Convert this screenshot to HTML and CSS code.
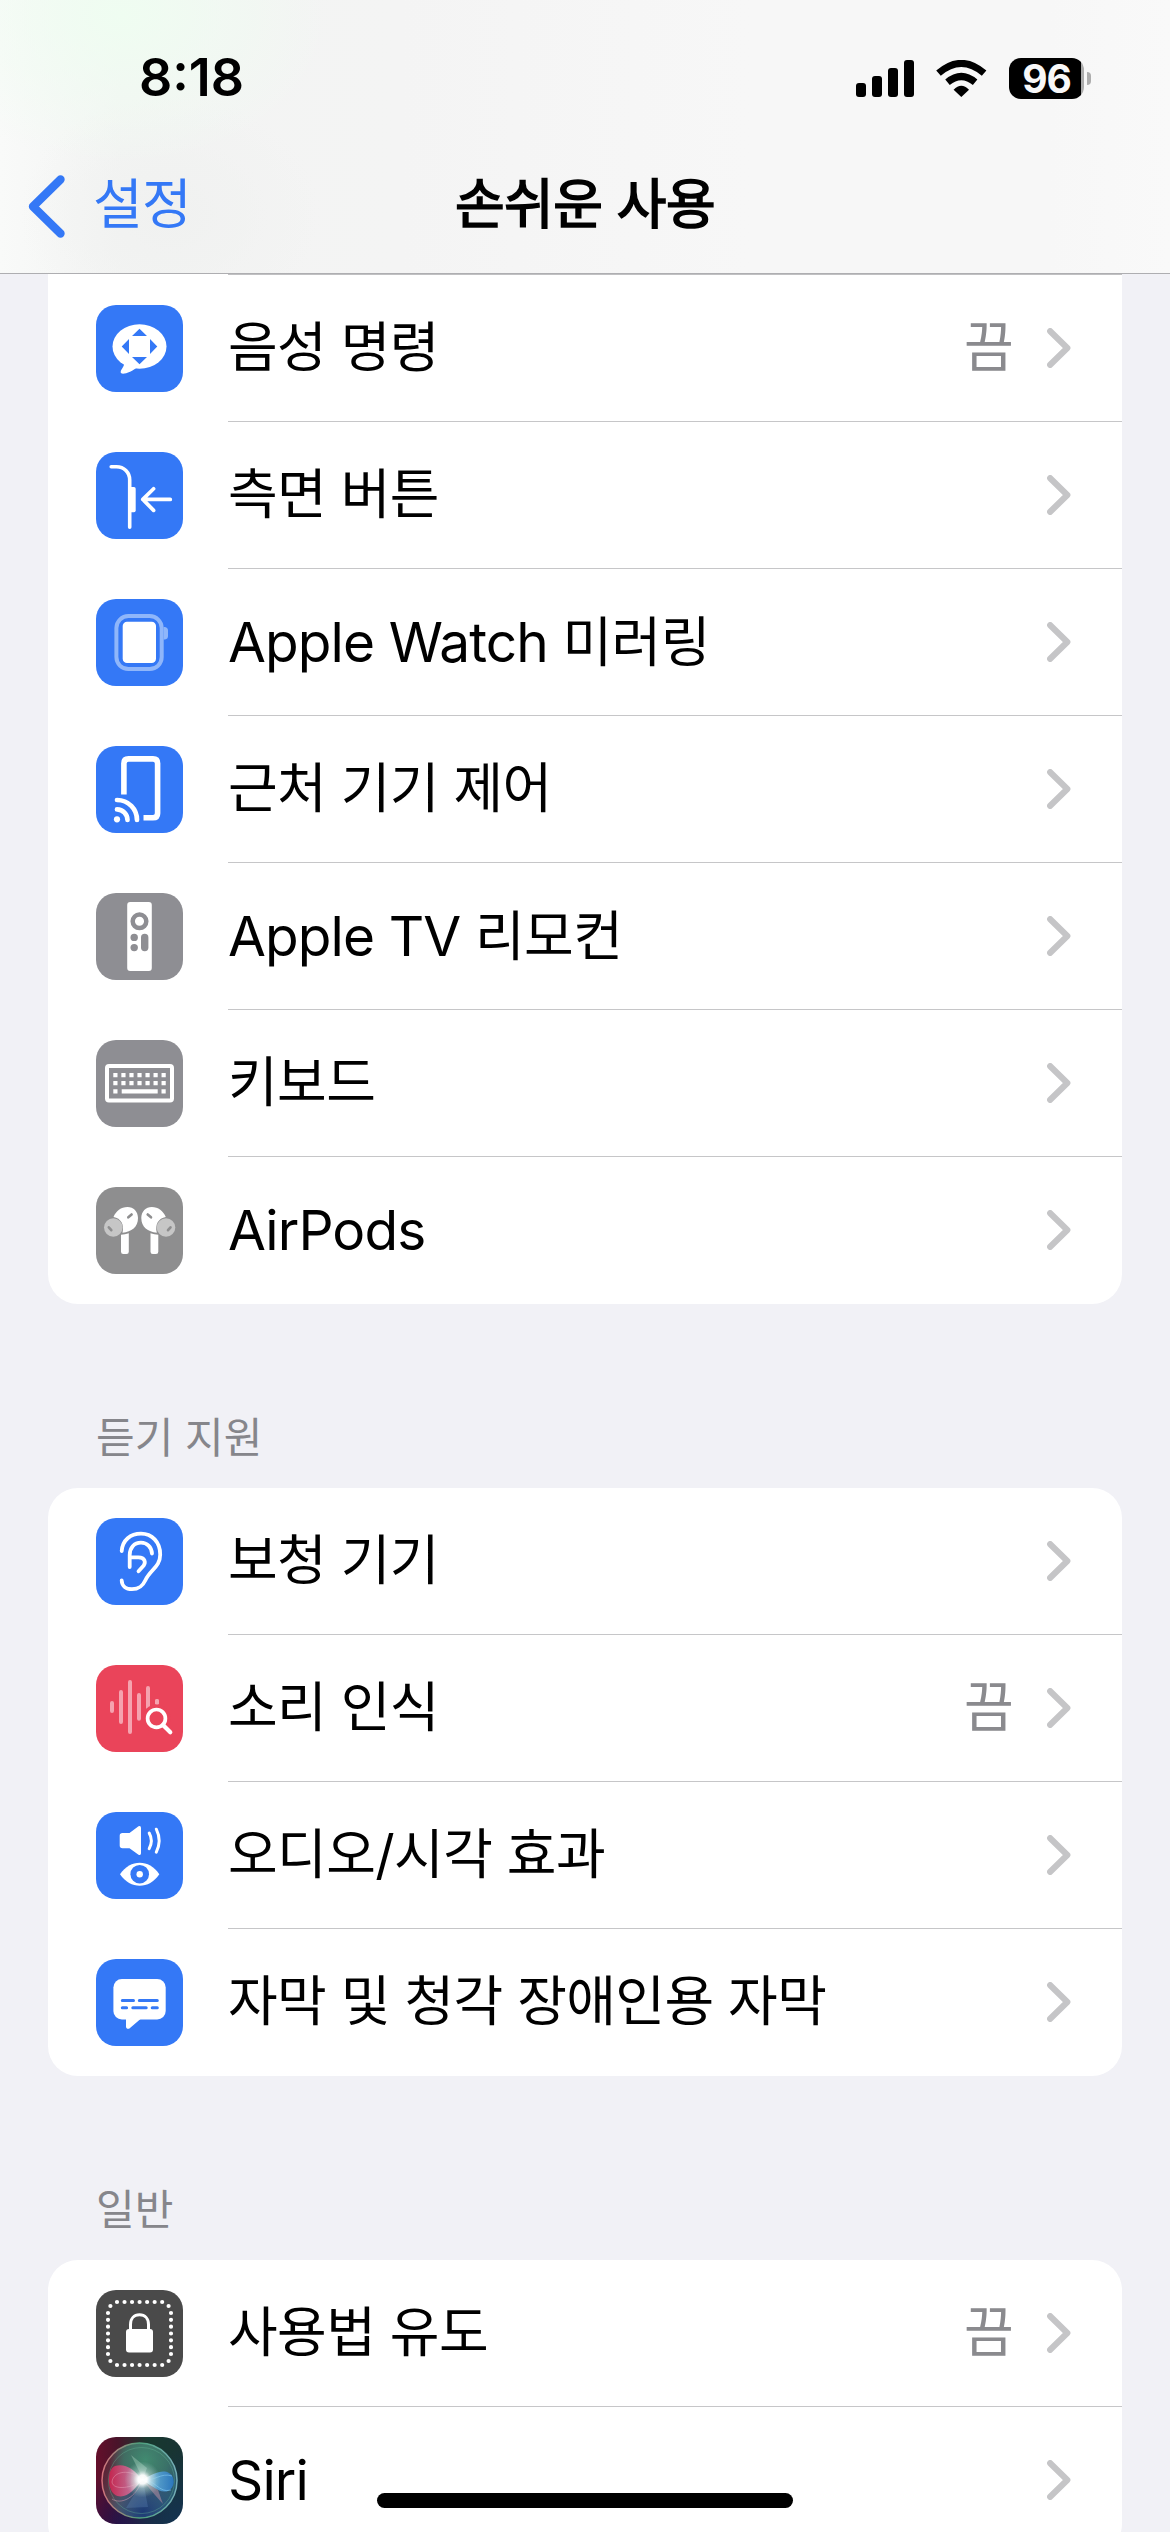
FILE: index.html
```html
<!DOCTYPE html>
<html lang="ko">
<head>
<meta charset="utf-8">
<title>손쉬운 사용</title>
<link rel="stylesheet" href="styles.css">
</head>
<body>
<svg class="defs" width="0" height="0">
  <defs>
    <symbol id="chevron" viewBox="0 0 24 40"><path d="M3.2 3.2L20.3 20L3.2 36.8" fill="none" stroke="#c5c5c7" stroke-width="6.2" stroke-linecap="round" stroke-linejoin="round"/></symbol>
    <g id="airpod">
      <path d="M17.5 30C20 24 25 20 31.5 20C37.500 20 42 24.500 42 31C42 40 35.500 45 26.500 45.700C28.500 38 25 31 17.500 30Z" fill="#fff"/>
      <circle cx="17.300" cy="40.500" r="9.300" fill="#c6c6c6"/>
      <path d="M12.800 40.300L15.300 43.200M32.300 30.300L35.600 27.500" stroke="#8e8e8f" stroke-width="2.600" stroke-linecap="round"/>
      <path d="M25 47.800Q29 47.600 32.800 46.300V64.700Q32.800 67 30.500 67H27.300Q25 67 25 64.700Z" fill="#fff"/>
    </g>
  </defs>
</svg>
<div class="screen">
  <header class="header">
    <div class="status">
      <div class="time">8:18</div>
      <div class="indicators">
        <svg class="signal" viewBox="0 0 58 37"><rect y="23" width="10" height="14" rx="3"/><rect x="16" y="16" width="10" height="21" rx="3"/><rect x="32" y="8" width="10" height="29" rx="3"/><rect x="48" width="10" height="37" rx="3"/></svg>
        <svg class="wifi" viewBox="0 0 51 37"><path d="M25.300 37L17.600 29.800Q25.300 21.800 33 29.800Z"/><path d="M11.500 22.300Q25.300 10.700 39.100 22.300" fill="none" stroke="#000" stroke-width="7"/><path d="M2.500 13.200Q25.300 -6.300 48.100 13.200" fill="none" stroke="#000" stroke-width="7"/></svg>
        <div class="battery"><div class="level">96</div><div class="nub"></div></div>
      </div>
    </div>
    <nav class="nav">
      <div class="back"><svg class="back-icon" viewBox="0 0 37 63"><path d="M32.500 4.500L5 31.500L32.500 58.500" fill="none" stroke="#3478f6" stroke-width="8.400" stroke-linecap="round" stroke-linejoin="round"/></svg><span class="back-label">설정</span></div>
      <h1 class="title">손쉬운 사용</h1>
      <div></div>
    </nav>
  </header>
  <main>
    <section class="card card-continued">
      <div class="cut-line"></div>
      <div class="row">
        <svg class="icon blue" viewBox="0 0 87 87"><ellipse cx="43.500" cy="41.500" rx="27" ry="22.300" fill="#fff"/><path d="M28 57C29 62 24.500 64 24.700 67.300C25 71 36 67 41.500 62Z" fill="#fff"/><path d="M43.500 23.700L51 31H36ZM43.500 59.300L51 52H36ZM25.700 41.500L33 34V49ZM61.300 41.500L54 34V49Z" fill="#3478f6"/></svg>
        <div class="body"><span class="label">음성 명령</span><span class="value">끔</span><svg class="chev"><use href="#chevron"/></svg></div>
      </div>
      <div class="row">
        <svg class="icon blue" viewBox="0 0 87 87"><g fill="none" stroke="#fff" stroke-linecap="round" stroke-linejoin="round"><path d="M15.200 14.700H20.500C28 14.700 33.700 20.500 33.700 28V75.300" stroke-width="3.600"/><path d="M57.600 36.700L46.800 47.400L57.600 58.400M47 47.400H74.300" stroke-width="3.700"/></g><path d="M33 35H38Q39.700 35 39.700 36.700V58.600Q39.700 60.300 38 60.300H33Z" fill="#fff"/></svg>
        <div class="body"><span class="label">측면 버튼</span><svg class="chev"><use href="#chevron"/></svg></div>
      </div>
      <div class="row">
        <svg class="icon blue" viewBox="0 0 87 87"><rect x="20.400" y="17.100" width="45.300" height="53" rx="12" fill="none" stroke="#8fb6fa" stroke-width="4"/><path d="M67.700 28H69Q72 28.500 72 31.500V37Q72 40 69 40.500H67.700Z" fill="#8fb6fa"/><rect x="26.700" y="22.700" width="33.300" height="41.300" rx="4.300" fill="#fff"/></svg>
        <div class="body"><span class="label"><span class="latin">Apple Watch</span> 미러링</span><svg class="chev"><use href="#chevron"/></svg></div>
      </div>
      <div class="row">
        <svg class="icon blue" viewBox="0 0 87 87"><g fill="none" stroke="#fff"><path d="M27.900 48.400V17.500Q27.900 12.900 32.500 12.900H57Q61.600 12.900 61.600 17.500V67.200Q61.600 71.800 57 71.800H47.500" stroke-width="5.600"/><path d="M21 63.400C27 63.400 31.500 68.500 31.500 74M21 54C32.500 54 41 63 41 74" stroke-width="4.700" stroke-linecap="round"/></g><circle cx="21" cy="73.300" r="3.100" fill="#fff"/></svg>
        <div class="body"><span class="label">근처 기기 제어</span><svg class="chev"><use href="#chevron"/></svg></div>
      </div>
      <div class="row">
        <svg class="icon gray" viewBox="0 0 87 87"><rect x="31.200" y="9" width="24.600" height="69" rx="3" fill="#fff"/><circle cx="43.500" cy="28.300" r="6.800" fill="none" stroke="#8e8e93" stroke-width="4.500"/><g fill="#8e8e93"><circle cx="38.200" cy="44.400" r="3.700"/><circle cx="38.200" cy="54.600" r="3.700"/><rect x="45" y="40.700" width="7.400" height="17.600" rx="3.700"/></g></svg>
        <div class="body"><span class="label"><span class="latin">Apple TV</span> 리모컨</span><svg class="chev"><use href="#chevron"/></svg></div>
      </div>
      <div class="row">
        <svg class="icon gray" viewBox="0 0 87 87"><rect x="11" y="26" width="65" height="34.600" rx="2" fill="none" stroke="#fff" stroke-width="4"/><path d="M17.300 35.200H70M17.300 43.200H70" stroke="#fff" stroke-width="4.200" stroke-dasharray="4.200 3.840"/><path d="M17.300 51.300H21.500M25.700 51.300H61.700M65.500 51.300H69.700" stroke="#fff" stroke-width="4.200"/></svg>
        <div class="body"><span class="label">키보드</span><svg class="chev"><use href="#chevron"/></svg></div>
      </div>
      <div class="row">
        <svg class="icon gray-neutral" viewBox="0 0 87 87"><use href="#airpod"/><use href="#airpod" transform="matrix(-1 0 0 1 87.300 0)"/></svg>
        <div class="body"><span class="label"><span class="latin">AirPods</span></span><svg class="chev"><use href="#chevron"/></svg></div>
      </div>
    </section>

    <h2 class="section-title">듣기 지원</h2>
    <section class="card">
      <div class="row">
        <svg class="icon blue" viewBox="0 0 87 87"><g fill="none" stroke="#fff" stroke-width="3.800" stroke-linecap="round" stroke-linejoin="round"><path d="M25.700 33C26.500 22 34.500 15.700 45 15.700C56 15.700 64.200 24 64.200 36.500C64.200 49 54.500 51.500 49.500 62C46.500 68.500 43 71.200 36 71.200C29.500 71.200 25.900 67.500 25.700 62.500"/><path d="M56 35.500C55.500 29 51 24.700 45 24.700C38 24.700 33.700 30 33.700 37V49M34 39.300H42.500C49 39.300 50 44.500 47.500 47.800L42.500 53.300"/></g></svg>
        <div class="body"><span class="label">보청 기기</span><svg class="chev"><use href="#chevron"/></svg></div>
      </div>
      <div class="row">
        <svg class="icon red" viewBox="0 0 87 87"><path d="M16 38V46M25 27V57M34 17V67M43 30V53.700M52 23V43M61 36V38" stroke="#f5a3af" stroke-width="4" stroke-linecap="round"/><circle cx="60.500" cy="53.400" r="14" fill="#ea445a"/><path d="M59 39V36A2 2 0 0 1 63 36V39Z" fill="#f5a3af"/><circle cx="60.500" cy="53.400" r="8.900" fill="none" stroke="#fff" stroke-width="3.700"/><path d="M67 60L74.300 67.300" stroke="#fff" stroke-width="4.200" stroke-linecap="round"/></svg>
        <div class="body"><span class="label">소리 인식</span><span class="value">끔</span><svg class="chev"><use href="#chevron"/></svg></div>
      </div>
      <div class="row">
        <svg class="icon blue" viewBox="0 0 87 87"><path d="M26.500 21H33.500L42.500 14.300Q45 13.500 45 16V41.300Q45 43.800 42.500 42.800L33.500 36.300H26.500Q23.700 36.300 23.700 33.500V23.800Q23.700 21 26.500 21Z" fill="#fff"/><path d="M53.200 21Q57.500 28.700 53.200 36.600M60.300 17.200Q66 28.700 60.300 40.200" fill="none" stroke="#fff" stroke-width="3" stroke-linecap="round"/><path d="M24 62.200C34.500 46.900 53 46.900 63.300 62.200C53 77.600 34.500 77.600 24 62.200Z" fill="#fff"/><circle cx="43.700" cy="62.200" r="9.300" fill="#3478f6"/><circle cx="43.700" cy="62.200" r="3.200" fill="#fff"/></svg>
        <div class="body"><span class="label">오디오/시각 효과</span><svg class="chev"><use href="#chevron"/></svg></div>
      </div>
      <div class="row">
        <svg class="icon blue" viewBox="0 0 87 87"><rect x="17.400" y="20" width="52.300" height="40.400" rx="8.500" fill="#fff"/><path d="M30 59V67.500C30 70 32.500 70.500 34 69L44.500 60Z" fill="#fff"/><path d="M26.300 41.400H37.500M43.300 41.400H61.300M26.300 48.800H30.600M36.800 48.800H50.200M56.200 48.800H61.300" stroke="#3478f6" stroke-width="3" stroke-linecap="round"/></svg>
        <div class="body"><span class="label">자막 및 청각 장애인용 자막</span><svg class="chev"><use href="#chevron"/></svg></div>
      </div>
    </section>

    <h2 class="section-title">일반</h2>
    <section class="card">
      <div class="row">
        <svg class="icon dark" viewBox="0 0 87 87"><g stroke="#fff" stroke-width="4.200" stroke-linecap="round" fill="none"><path d="M21 12H67M21 75H67" stroke-dasharray="0 7.530"/><path d="M12 23V65M75 23V65" stroke-dasharray="0 6.830"/><path d="M14.400 16h.01M72.600 16h.01M14.400 71h.01M72.600 71h.01"/></g><rect x="30" y="39" width="27" height="23.400" rx="3" fill="#fff"/><path d="M34.500 40V34.500C34.500 28.500 38 24.800 43.500 24.800C49 24.800 52.500 28.500 52.500 34.500V40" fill="none" stroke="#fff" stroke-width="3"/></svg>
        <div class="body"><span class="label">사용법 유도</span><span class="value">끔</span><svg class="chev"><use href="#chevron"/></svg></div>
      </div>
      <div class="row">
        <svg class="icon siri" viewBox="0 0 87 87">
          <defs>
            <linearGradient id="orb" x1="0" y1=".3" x2="1" y2=".7"><stop offset="0" stop-color="#5e1c30"/><stop offset=".4" stop-color="#52555f"/><stop offset="1" stop-color="#245a72"/></linearGradient>
            <radialGradient id="orbTop" cx="58%" cy="22%" r="48%"><stop offset="0" stop-color="#418a70"/><stop offset=".6" stop-color="#3b7968" stop-opacity=".8"/><stop offset="1" stop-color="#3b7968" stop-opacity="0"/></radialGradient>
            <radialGradient id="orbBottom" cx="55%" cy="92%" r="48%"><stop offset="0" stop-color="#1c3974"/><stop offset="1" stop-color="#315b91" stop-opacity="0"/></radialGradient>
            <linearGradient id="rim" x1="0" y1="0" x2="1" y2="0"><stop offset="0" stop-color="#d2737c"/><stop offset=".5" stop-color="#4da07b"/><stop offset="1" stop-color="#76aeb8"/></linearGradient>
            <linearGradient id="pink" x1="0" y1="0" x2="1" y2="0"><stop offset="0" stop-color="#cf2450"/><stop offset=".65" stop-color="#ce6b96"/><stop offset="1" stop-color="#fff"/></linearGradient>
            <linearGradient id="azure" x1="0" y1="0" x2="1" y2="0"><stop offset="0" stop-color="#fff"/><stop offset=".45" stop-color="#5ba5d5"/><stop offset="1" stop-color="#2b79c4"/></linearGradient>
            <radialGradient id="flare"><stop offset="0" stop-color="#fff"/><stop offset=".25" stop-color="#fff" stop-opacity=".95"/><stop offset=".5" stop-color="#d9eeeb" stop-opacity=".45"/><stop offset="1" stop-color="#bde4db" stop-opacity="0"/></radialGradient>
          </defs>
          <circle cx="43.500" cy="43.500" r="37.500" fill="url(#orb)"/>
          <circle cx="43.500" cy="43.500" r="37.500" fill="url(#orbTop)"/>
          <circle cx="43.500" cy="43.500" r="37.500" fill="url(#orbBottom)"/>
          <circle cx="45.500" cy="43.500" r="33" fill="none" stroke="#69bd9c" stroke-opacity=".35"/>
          <circle cx="43.500" cy="43.500" r="37.500" fill="none" stroke="url(#rim)" stroke-width="1.500"/>
          <path d="M46 43C38 31 28 26 19 29C11 32 11 51 18 57C28 65 39 52 46 43Z" fill="url(#pink)" opacity=".9"/>
          <path d="M46 43C35 31 17 34 16 45C17 54 38 51 46 43ZM46 43C40 61 25 68 16 62" fill="none" stroke="#eba8bf" stroke-opacity=".45"/>
          <path d="M46 43C57 37 66 32 73 36C80 40 79 51 72 54C63 57 54 47 46 43Z" fill="url(#azure)" opacity=".9"/>
          <path d="M46 43C58 45 65 35 76 39M46 43C58 41 63 57 75 53" fill="none" stroke="#83ccf2" stroke-opacity=".6"/>
          <path d="M47 43L30 71L52 70Z" fill="#719bcb" opacity=".25"/>
          <path d="M48 45L59 58L67 67L62 53Z" fill="#d49bae" opacity=".45"/>
          <path d="M47 42L35 18L51 31Z" fill="#d0f2df" opacity=".3"/>
          <circle cx="46.500" cy="42.500" r="18" fill="url(#flare)"/>
        </svg>
        <div class="body"><span class="label"><span class="latin">Siri</span></span><svg class="chev"><use href="#chevron"/></svg></div>
      </div>
    </section>
  </main>
  <div class="home-indicator"></div>
</div>
</body>
</html>
```
FILE: styles.css
```css
* { box-sizing: border-box; }
body { margin: 0; background: #f1f1f6; color: #000; font-family: Inter, "Noto Sans CJK KR", sans-serif; }
.defs { position: absolute; }
.screen { position: relative; width: 1170px; height: 2532px; overflow: hidden; background: #f1f1f6; }

.header {
  height: 274px;
  border-bottom: 1px solid #aeaeb1;
  background:
    radial-gradient(ellipse 210px 150px at 120px 15px, #effdf1 0%, rgba(240, 253, 242, 0) 100%),
    radial-gradient(ellipse 150px 120px at 170px 215px, #f0f1f0 0%, rgba(241, 242, 241, 0) 100%),
    linear-gradient(90deg, #f9faf9 0, #f3f4f3 120px, #f4f4f4 400px, #f7f7f7 750px, #f7f7f7 1050px, #f9f9f9 100%);
}
.status { display: flex; justify-content: space-between; align-items: center; height: 156px; padding: 0 79px 0 139px; }
.time { font-size: 52px; font-weight: 600; line-height: 60px; }
.indicators { display: flex; align-items: center; }
.signal { width: 58px; height: 37px; margin-right: 22px; }
.wifi { width: 51px; height: 37px; margin-right: 22px; }
.battery { display: flex; align-items: center; gap: 3px; }
.level { width: 75px; height: 41px; border-radius: 12px; background: linear-gradient(90deg, #000 72px, #adadad 72px); color: #f8f8f8; font-size: 39px; font-weight: 700; line-height: 42px; text-align: center; letter-spacing: -1px; }
.nub { width: 4px; height: 13px; border-radius: 0 6px 6px 0; background: #adadad; }
.nav { display: grid; grid-template-columns: 1fr auto 1fr; align-items: center; height: 100px; padding-left: 28px; }
.back { display: flex; align-items: center; gap: 28px; color: #3478f6; }
.back-icon { width: 37px; height: 63px; }
.back-label { font-size: 54px; line-height: 76px; letter-spacing: -0.6px; padding-bottom: 3px; }
.title { margin: 0 28px 0 0; padding-bottom: 2px; font-size: 54px; font-weight: 400; line-height: 80px; letter-spacing: -0.6px; -webkit-text-stroke: 1.7px #000; }

.card { margin: 0 48px; border-radius: 30px; background: #fff; overflow: hidden; }
.card-continued { border-top-left-radius: 0; border-top-right-radius: 0; }
.cut-line { height: 1px; margin-left: 180px; background: #c0c0c2; }
.row { display: flex; align-items: center; height: 147px; padding-left: 48px; }
.icon { flex: none; width: 87px; height: 87px; border-radius: 20px; }
.blue { background: #3478f6; }
.gray { background: #8e8e93; }
.gray-neutral { background: #8e8e8f; }
.red { background: #ea445a; }
.dark { background: #4a4a4a; }
.siri { background: radial-gradient(circle at 100% 100%, #143252 0, rgba(20, 50, 82, 0) 60%), radial-gradient(circle at 30% 100%, #271049 0, rgba(39, 16, 73, 0) 50%), linear-gradient(90deg, #650f2b 0, #49142a 25%, #18392f 60%, #183334 100%); }
.body { display: flex; flex: 1; align-items: center; height: 147px; margin-left: 45px; padding-right: 51px; border-bottom: 1px solid #c6c6c8; }
.row:last-child .body { border-bottom-color: transparent; }
.label { flex: 1; font-size: 54px; line-height: 76px; letter-spacing: -0.6px; white-space: pre; }
.latin { font-size: 55px; letter-spacing: -0.9px; }
.value { margin-right: 34px; color: #8a8a8e; font-size: 54px; line-height: 76px; letter-spacing: -0.6px; }
.chev { flex: none; width: 24px; height: 40px; }

.section-title { height: 184px; margin: 0; padding: 102px 96px 0; color: #86868b; font-size: 42px; font-weight: 400; line-height: 64px; }

.home-indicator { position: absolute; left: 377px; top: 2493px; width: 416px; height: 15px; border-radius: 8px; background: #000; }
```
